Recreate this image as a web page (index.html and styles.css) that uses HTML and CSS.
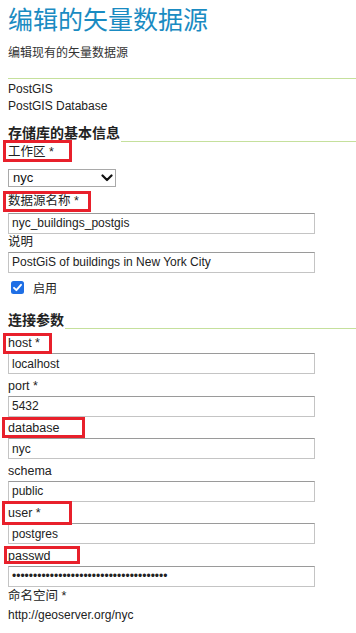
FILE: index.html
```html
<!DOCTYPE html>
<html lang="zh-CN">
<head>
    <meta charset="UTF-8">
    <meta name="viewport" content="width=device-width, initial-scale=1.0">
    <title>编辑的矢量数据源</title>
    <link rel="stylesheet" href="styles.css">
</head>
<body>
    <div class="page">
        <h1 class="page-title">编辑的矢量数据源</h1>
        <p class="page-desc">编辑现有的矢量数据源</p>
        <div class="store-type">
            <div>PostGIS</div>
            <div>PostGIS Database</div>
        </div>

        <form class="store-form">
            <h3 class="section-title"><span>存储库的基本信息</span><i class="rule"></i></h3>

            <label class="field-label after-title mark mark-ws" for="workspace">工作区 *</label>
            <div class="select-wrap">
                <select id="workspace" class="select">
                    <option>nyc</option>
                </select>
                <svg class="select-arrow" width="12" height="8" viewBox="0 0 12 8">
                    <path d="M1.5 1.5 L6 6 L10.5 1.5" fill="none" stroke="#111" stroke-width="2.2" stroke-linecap="round" stroke-linejoin="round"/>
                </svg>
            </div>

            <label class="field-label mark mark-name gap-name" for="storeName">数据源名称 *</label>
            <input class="text-input first" type="text" id="storeName" value="nyc_buildings_postgis">

            <label class="field-label tight" for="desc">说明</label>
            <input class="text-input" type="text" id="desc" value="PostGiS of buildings in New York City">

            <div class="check-row">
                <svg class="checkbox" width="13" height="13" viewBox="0 0 13 13">
                    <rect x="0" y="0" width="13" height="13" rx="2.5" fill="#1f6fe5"/>
                    <path d="M3 6.8 L5.4 9.2 L10 3.8" fill="none" stroke="#fff" stroke-width="1.9" stroke-linecap="round" stroke-linejoin="round"/>
                </svg>
                <span>启用</span>
            </div>

            <h3 class="section-title second"><span>连接参数</span><i class="rule"></i></h3>

            <label class="field-label after-rule mark mark-host" for="host">host *</label>
            <input class="text-input" type="text" id="host" value="localhost">

            <label class="field-label" for="port">port *</label>
            <input class="text-input" type="text" id="port" value="5432">

            <label class="field-label mark mark-db" for="database">database</label>
            <input class="text-input" type="text" id="database" value="nyc">

            <label class="field-label" for="schema">schema</label>
            <input class="text-input" type="text" id="schema" value="public">

            <label class="field-label mark mark-user" for="user">user *</label>
            <input class="text-input" type="text" id="user" value="postgres">

            <label class="field-label mark mark-pw" for="passwd">passwd</label>
            <input class="text-input" type="password" id="passwd" value="postgrespostgrespostgrespostgrespostg">

            <div class="field-label ns-label">命名空间 *</div>
            <div class="ns-value">http://geoserver.org/nyc</div>
        </form>
    </div>
</body>
</html>
```

FILE: styles.css
```css
body {
    margin: 0;
    background-color: #fff;
    font-family: "Liberation Sans", Arial, "Noto Sans CJK SC", sans-serif;
    font-size: 12px;
    color: #222;
}
.page {
    padding: 0 0 0 8px;
}
.page-title {
    margin: 3px 0 0;
    font-family: "Noto Sans CJK SC", sans-serif;
    font-size: 25px;
    line-height: 30px;
    height: 30px;
    font-weight: 400;
    color: #1a8bc2;
}
.page-desc {
    margin: 11px 0 0;
    height: 16px;
    line-height: 16px;
    font-family: "Noto Sans CJK SC", sans-serif;
    color: #333;
}
.store-type {
    margin-top: 18px;
    border-top: 1px solid #c5e09c;
    padding-top: 2px;
    line-height: 17px;
    color: #222;
}
.store-form {
    margin: 0;
}
.section-title {
    display: flex;
    align-items: flex-end;
    height: 20px;
    margin: 7px 0 0;
    font-family: "Noto Sans CJK SC", sans-serif;
    font-size: 14px;
    line-height: 20px;
    font-weight: 700;
    color: #222;
}
.section-title.second {
    margin-top: 13px;
}
.section-title .rule {
    flex: 1;
    height: 1px;
    margin-left: 1px;
    background-color: #c5e09c;
}
.field-label {
    display: block;
    height: 16px;
    margin-top: 3.5px;
    line-height: 16px;
    font-size: 12.5px;
    color: #222;
}
.field-label.after-title {
    margin-top: 1.5px;
}
.field-label.after-rule {
    margin-top: 6.5px;
}
.field-label.gap-name {
    margin-top: 6px;
}
.field-label.tight {
    margin-top: 0;
}
.field-label.ns-label {
    margin-top: 1.5px;
}
.mark {
    position: relative;
}
.mark::after {
    content: "";
    position: absolute;
    left: -5px;
    top: -2px;
    height: 21px;
    border: 3px solid #e8202b;
    box-sizing: border-box;
}
.mark-ws::after {
    top: -4px;
    height: 22px;
    width: 69px;
}
.mark-name::after {
    width: 88px;
}
.mark-host::after {
    top: -2.5px;
    width: 49px;
}
.mark-db::after {
    left: -6px;
    top: -3.5px;
    width: 83px;
}
.mark-user::after {
    left: -6px;
    top: -4.5px;
    height: 24px;
    width: 70px;
}
.mark-pw::after {
    left: -4px;
    top: -2px;
    height: 18px;
    width: 76px;
}
.select-wrap {
    position: relative;
    width: 108px;
    margin-top: 9px;
}
.select {
    display: block;
    width: 108px;
    height: 18px;
    margin: 0;
    padding: 0 0 0 4px;
    border: 1px solid #a9a9a9;
    border-radius: 0;
    background-color: #fff;
    font-family: "Liberation Sans", Arial, sans-serif;
    font-size: 13px;
    color: #111;
    -webkit-appearance: none;
    appearance: none;
}
.select-arrow {
    position: absolute;
    right: 3px;
    top: 5px;
}
.text-input {
    display: block;
    width: 307px;
    height: 21px;
    margin: 2px 0 0;
    padding: 0 3px;
    border: 1px solid #c4c4c4;
    border-top-color: #9a9a9a;
    box-sizing: border-box;
    font-family: "Liberation Sans", Arial, sans-serif;
    font-size: 12px;
    color: #222;
    background-color: #fff;
}
.text-input.first {
    margin-top: 4px;
}
.check-row {
    display: flex;
    align-items: center;
    height: 16px;
    margin-top: 7px;
    padding-left: 3px;
    font-family: "Noto Sans CJK SC", sans-serif;
    font-size: 12px;
    color: #222;
}
.checkbox {
    margin-right: 9px;
}
.ns-value {
    margin-top: 3px;
    line-height: 16px;
    color: #222;
}
```
